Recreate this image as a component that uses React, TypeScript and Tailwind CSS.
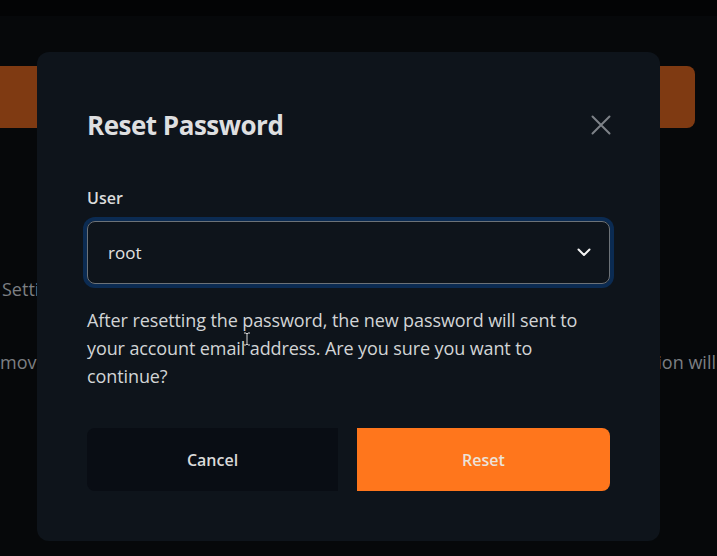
const FONT = { fontFamily: '"Open Sans", "Noto Sans", sans-serif' }

function Backdrop() {
  return (
    <div className="w-full h-full bg-[#06080a] flex flex-col">
      <div className="h-[16px] bg-[#030405]" />
      <div className="mt-[50px] h-[62px] w-[695px] rounded-r-lg bg-[#7f3a12]" />
      <div className="mt-[148px] pl-[2px] text-[18px] text-[#7c7f83] whitespace-nowrap">Setti</div>
      <div className="mt-[46px] flex justify-between text-[18px] text-[#7c7f83] whitespace-nowrap">
        <span>move</span>
        <span className="pr-[1px]">ion will</span>
      </div>
    </div>
  )
}

function ResetDialog() {
  return (
    <div className="absolute left-[37px] top-[52px] w-[623px] h-[489px] rounded-xl bg-[#0e141b] pt-[57px] px-[50px]">
      <div className="flex items-center justify-between h-[32px]">
        <h2 className="text-[26px] font-bold text-[#dedfe0] tracking-[-0.5px]">Reset Password</h2>
        <svg width="20" height="20" viewBox="0 0 20 20" className="-mr-[1px]">
          <path d="M1.5 1.5l17 17M18.5 1.5l-17 17" stroke="#7d8288" strokeWidth="2" strokeLinecap="round" />
        </svg>
      </div>

      <label className="block mt-[46px] text-[16px] leading-[22px] font-semibold text-[#dcdcdc]">User</label>
      <div className="mt-[12px] h-[63px] rounded-lg border border-[#6c7278] shadow-[0_0_0_4px_#0b2b52] flex items-center justify-between pl-[20px] pr-[18px]">
        <span className="text-[17px] text-[#e2e2e2]">root</span>
        <svg width="14" height="9" viewBox="0 0 14 9">
          <path d="M1.5 1.5l5.5 5.5 5.5-5.5" fill="none" stroke="#f2f2f2" strokeWidth="2" strokeLinecap="round" strokeLinejoin="round" />
        </svg>
      </div>

      <p className="mt-[22px] w-[505px] text-[18px] leading-[28px] tracking-[-0.1px] text-[#d2d4d6]">
        After resetting the password, the new password will sent to your account email address. Are you sure you want to continue?
      </p>

      <div className="mt-[38px] flex gap-[19px]">
        <button className="w-[251px] h-[63px] rounded-l-lg bg-[#090d14] text-[16px] font-semibold text-[#dadada]">Cancel</button>
        <button className="flex-1 h-[63px] rounded-r-lg bg-[#ff761c] text-[16px] font-semibold text-[#ece3da]">Reset</button>
      </div>

      {/* text cursor */}
      <svg className="absolute left-[206px] top-[280px]" width="8" height="14" viewBox="0 0 8 14">
        <path d="M1 1h2l1 1 1-1h2M4 2v10M1 13h2l1-1 1 1h2" fill="none" stroke="#d8d8d8" strokeWidth="1" />
      </svg>
    </div>
  )
}

export default function App() {
  return (
    <div className="relative w-[717px] h-[556px] overflow-hidden" style={FONT}>
      <Backdrop />
      <ResetDialog />
    </div>
  )
}
